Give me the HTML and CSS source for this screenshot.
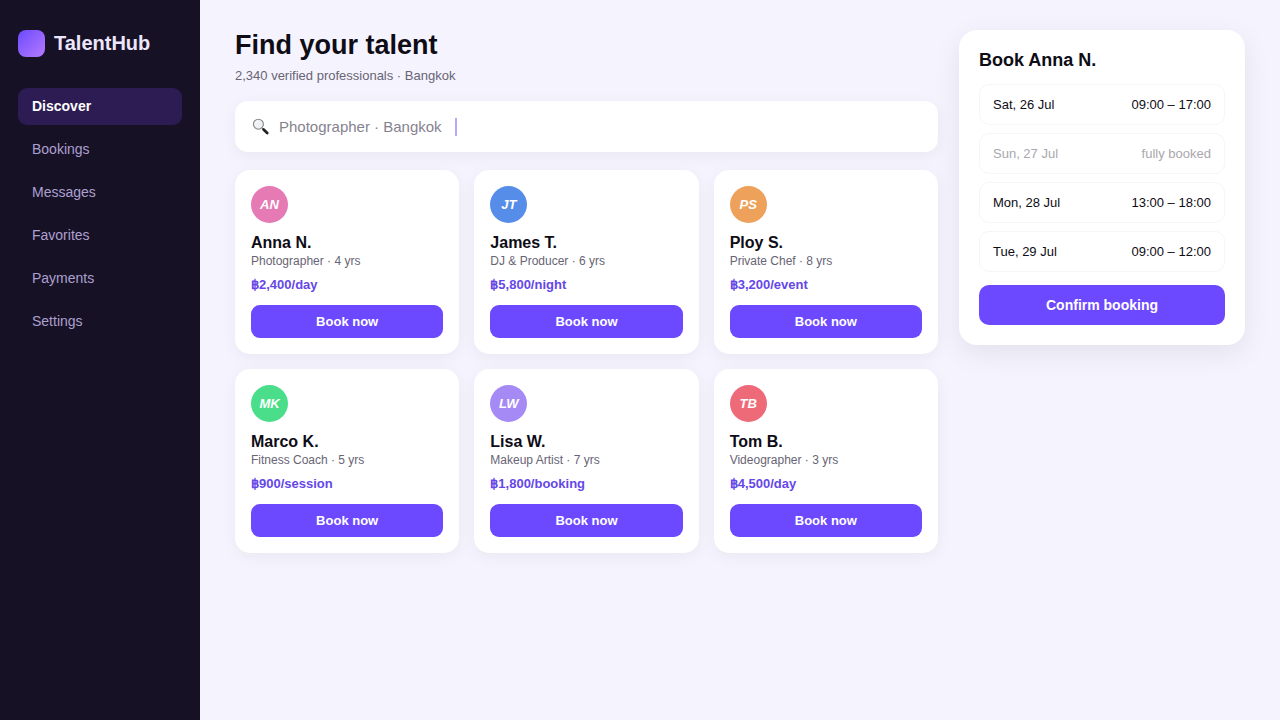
FILE: index.html
```html
<!DOCTYPE html>
<html lang="en">
<head>
  <meta charset="UTF-8">
  <meta name="viewport" content="width=device-width, initial-scale=1">
  <title>TalentHub</title>
  <link rel="stylesheet" href="styles.css">
</head>
<body>
  <div class="app">
    <aside class="sidebar">
      <div class="brand">
        <span class="brand-mark"></span>
        <span>TalentHub</span>
      </div>
      <nav class="nav">
        <a class="nav-link active" href="#">Discover</a>
        <a class="nav-link" href="#">Bookings</a>
        <a class="nav-link" href="#">Messages</a>
        <a class="nav-link" href="#">Favorites</a>
        <a class="nav-link" href="#">Payments</a>
        <a class="nav-link" href="#">Settings</a>
      </nav>
    </aside>

    <main class="content">
      <h1 class="title">Find your talent</h1>
      <p class="subtitle">2,340 verified professionals · Bangkok</p>

      <label class="search">
        <svg class="search-icon" viewBox="0 0 18 18" aria-hidden="true">
          <path d="M10.2 10.2l1.8 1.8" stroke="#777" stroke-width="1.5"/>
          <path d="M11.6 11.6l3.6 3.4" stroke="#222" stroke-width="2.8" stroke-linecap="round"/>
          <circle cx="6.4" cy="6.2" r="5" fill="#eef0f1" stroke="#85858a" stroke-width="1.1"/>
          <path d="M3.4 5.7a3.2 3.2 0 0 1 2.6-2.6" fill="none" stroke="#fff" stroke-width="1"/>
        </svg>
        <input class="search-input" type="text" value="Photographer · Bangkok" aria-label="Search">
        <span class="caret"></span>
      </label>

      <div class="cards">
        <article class="card">
          <i class="avatar pink">AN</i>
          <h2 class="name">Anna N.</h2>
          <p class="role">Photographer · 4 yrs</p>
          <p class="price">฿2,400/day</p>
          <button class="btn">Book now</button>
        </article>
        <article class="card">
          <i class="avatar blue">JT</i>
          <h2 class="name">James T.</h2>
          <p class="role">DJ &amp; Producer · 6 yrs</p>
          <p class="price">฿5,800/night</p>
          <button class="btn">Book now</button>
        </article>
        <article class="card">
          <i class="avatar orange">PS</i>
          <h2 class="name">Ploy S.</h2>
          <p class="role">Private Chef · 8 yrs</p>
          <p class="price">฿3,200/event</p>
          <button class="btn">Book now</button>
        </article>
        <article class="card">
          <i class="avatar green">MK</i>
          <h2 class="name">Marco K.</h2>
          <p class="role">Fitness Coach · 5 yrs</p>
          <p class="price">฿900/session</p>
          <button class="btn">Book now</button>
        </article>
        <article class="card">
          <i class="avatar purple">LW</i>
          <h2 class="name">Lisa W.</h2>
          <p class="role">Makeup Artist · 7 yrs</p>
          <p class="price">฿1,800/booking</p>
          <button class="btn">Book now</button>
        </article>
        <article class="card">
          <i class="avatar red">TB</i>
          <h2 class="name">Tom B.</h2>
          <p class="role">Videographer · 3 yrs</p>
          <p class="price">฿4,500/day</p>
          <button class="btn">Book now</button>
        </article>
      </div>
    </main>

    <aside class="booking">
      <h2 class="booking-title">Book Anna N.</h2>
      <ul class="slots">
        <li class="slot"><span>Sat, 26 Jul</span><span>09:00 – 17:00</span></li>
        <li class="slot full"><span>Sun, 27 Jul</span><span>fully booked</span></li>
        <li class="slot"><span>Mon, 28 Jul</span><span>13:00 – 18:00</span></li>
        <li class="slot"><span>Tue, 29 Jul</span><span>09:00 – 12:00</span></li>
      </ul>
      <button class="btn confirm">Confirm booking</button>
    </aside>
  </div>
</body>
</html>
```
FILE: styles.css
```css
* {
  box-sizing: border-box;
  margin: 0;
  padding: 0;
}

body {
  font-family: "Liberation Sans", Arial, sans-serif;
  background-color: #f5f3fe;
  color: #0e0c15;
}

.app {
  display: flex;
  align-items: flex-start;
  min-height: 100vh;
  padding-right: 35px;
}

/* sidebar */
.sidebar {
  width: 200px;
  flex-shrink: 0;
  align-self: stretch;
  padding: 29px 18px;
  background-color: #171126;
}

.brand {
  display: flex;
  align-items: center;
  gap: 9px;
  margin-bottom: 31px;
  font-size: 20px;
  line-height: 28px;
  font-weight: bold;
  color: #ece6fd;
}

.brand-mark {
  width: 27px;
  height: 27px;
  border-radius: 8px;
  background: linear-gradient(135deg, #6c4aff, #b57bff);
}

.nav {
  display: flex;
  flex-direction: column;
  gap: 6px;
}

.nav-link {
  padding: 10px 14px;
  border-radius: 9px;
  font-size: 14px;
  line-height: 17px;
  color: #aca0cf;
  text-decoration: none;
}

.nav-link.active {
  background-color: #2c1c53;
  color: #fff;
  font-weight: bold;
}

/* main column */
.content {
  flex: 1;
  min-width: 0;
  padding: 29px 21px 29px 35px;
}

.title {
  font-size: 27px;
  line-height: 32px;
}

.subtitle {
  margin-top: 6px;
  font-size: 13px;
  line-height: 18px;
  color: #686474;
}

.search {
  display: flex;
  align-items: center;
  height: 51px;
  margin: 16px 0 18px;
  padding: 0 17px;
  border-radius: 13px;
  background-color: #fff;
  box-shadow: 0 4px 16px rgba(0, 0, 0, 0.05);
}

.search-icon {
  width: 18px;
  height: 18px;
  margin-right: 9px;
}

.search-input {
  width: 172px;
  border: none;
  outline: none;
  background: none;
  font-family: inherit;
  font-size: 15px;
  color: #86828f;
}

.caret {
  width: 2px;
  height: 18px;
  margin-left: 4px;
  background-color: #b8a9f5;
}

.cards {
  display: grid;
  grid-template-columns: repeat(3, 1fr);
  gap: 15px;
}

.card {
  padding: 16px;
  border-radius: 15px;
  background-color: #fff;
  box-shadow: 0 4px 16px rgba(0, 0, 0, 0.05);
}

.avatar {
  display: flex;
  align-items: center;
  justify-content: center;
  width: 37px;
  height: 37px;
  margin-bottom: 10px;
  border-radius: 50%;
  font-size: 13px;
  font-weight: bold;
  color: #fff;
}

.pink { background-color: #e67ab4; }
.blue { background-color: #568de9; }
.orange { background-color: #eea15a; }
.green { background-color: #4ade8b; }
.purple { background-color: #a58af6; }
.red { background-color: #ef6a78; }

.name {
  font-size: 16px;
  line-height: 20px;
}

.role {
  font-size: 12px;
  line-height: 16px;
  color: #686474;
}

.price {
  margin-top: 8px;
  font-size: 13px;
  line-height: 16px;
  font-weight: bold;
  color: #6547e8;
}

.btn {
  display: block;
  width: 100%;
  height: 33px;
  margin-top: 12px;
  border: none;
  border-radius: 9px;
  background-color: #6c48ff;
  color: #fff;
  font-family: inherit;
  font-size: 13px;
  font-weight: bold;
  cursor: pointer;
}

/* booking panel */
.booking {
  width: 286px;
  flex-shrink: 0;
  margin-top: 30px;
  padding: 20px;
  border-radius: 18px;
  background-color: #fff;
  box-shadow: 0 8px 28px rgba(0, 0, 0, 0.08);
}

.booking-title {
  margin-bottom: 14px;
  font-size: 18px;
  line-height: 20px;
}

.slots {
  display: flex;
  flex-direction: column;
  gap: 8px;
  list-style: none;
}

.slot {
  display: flex;
  justify-content: space-between;
  padding: 11px 13px;
  border: 1px solid #f6f5f8;
  border-radius: 10px;
  font-size: 13px;
  line-height: 17px;
}

.slot.full {
  color: #a9a7ae;
}

.confirm {
  height: 40px;
  margin-top: 13px;
  border-radius: 10px;
  font-size: 14px;
}
```
